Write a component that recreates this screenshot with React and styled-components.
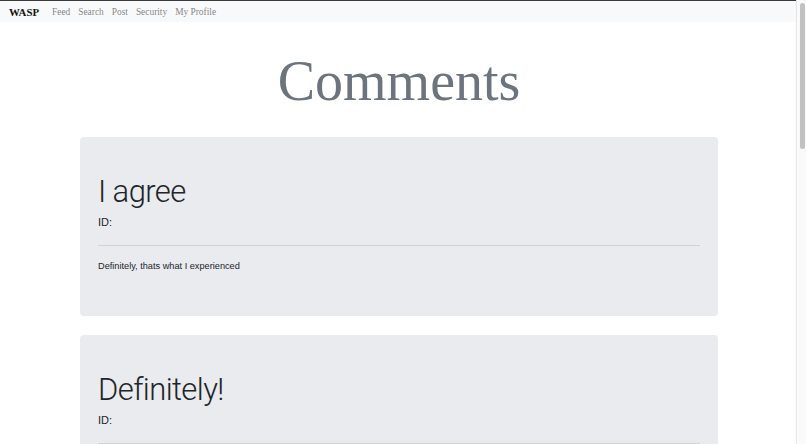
import React from "react";
import styled, { createGlobalStyle } from "styled-components";

const Global = createGlobalStyle`
  html, body { margin: 0; padding: 0; overflow: hidden; background: #fff; }
  body { font-family: "Liberation Sans", Arial, sans-serif; color: #212529; }
  * { box-sizing: border-box; }
`;

const Page = styled.div`
  width: calc(100vw - 8px);
  min-height: 100vh;
`;

const NavBar = styled.nav`
  display: flex;
  align-items: center;
  height: 22px;
  border-top: 1px solid #3a3a3a;
  background: #f8f9fa;
  padding: 0 9px;
  font-family: "Liberation Serif", "Times New Roman", serif;
`;

const Brand = styled.a`
  font-size: 10.8px;
  line-height: 12px;
  font-weight: 700;
  color: #111;
  margin-right: 13px;
  text-decoration: none;
`;

const NavLinks = styled.div`
  display: flex;
  gap: 8px;
`;

const NavLink = styled.a`
  font-size: 9.4px;
  line-height: 12px;
  color: rgba(0, 0, 0, 0.5);
  text-decoration: none;
`;

const Title = styled.h1`
  margin: 25.5px 0 22px;
  text-align: center;
  font-family: "Liberation Serif", "Times New Roman", serif;
  font-weight: 400;
  font-size: 56px;
  line-height: 67px;
  color: #6c757d;
`;

const List = styled.div`
  width: 638px;
  margin: 0 auto;
  display: flex;
  flex-direction: column;
  gap: 19px;
`;

const Card = styled.section`
  background: #e9ebef;
  border-radius: 4px;
  padding: 37px 18px 43px;
`;

const Heading = styled.h2`
  margin: 0 0 4px;
  font-family: Roboto, "Liberation Sans", sans-serif;
  font-weight: 300;
  font-size: 31px;
  line-height: 36px;
  letter-spacing: -0.6px;
  color: #212529;
`;

const Meta = styled.p`
  margin: 0;
  font-size: 11px;
  line-height: 16px;
  color: #212529;
`;

const Rule = styled.hr`
  margin: 15px 0 13px;
  border: 0;
  border-top: 1px solid rgba(0, 0, 0, 0.1);
`;

const Body = styled.p`
  margin: 0;
  font-size: 9.2px;
  line-height: 14px;
  color: #212529;
`;

const ScrollTrack = styled.div`
  position: fixed;
  top: 0;
  right: 0;
  width: 10px;
  height: 100vh;
  background: #fafafa;
  border-left: 1px solid #e6e6e6;
`;

const ScrollThumb = styled.div`
  position: absolute;
  top: 3px;
  left: 3px;
  width: 5px;
  height: 146px;
  border-radius: 3px;
  background: #c2c2c2;
`;

const comments = [
  { title: "I agree", body: "Definitely, thats what I experienced" },
  { title: "Definitely!", body: "Yes, I think so too" },
];

export default function App() {
  return (
    <>
      <Global />
      <Page>
        <NavBar>
          <Brand href="#">WASP</Brand>
          <NavLinks>
            {["Feed", "Search", "Post", "Security", "My Profile"].map((l) => (
              <NavLink key={l} href="#">{l}</NavLink>
            ))}
          </NavLinks>
        </NavBar>
        <Title>Comments</Title>
        <List>
          {comments.map((c) => (
            <Card key={c.title}>
              <Heading>{c.title}</Heading>
              <Meta>ID:</Meta>
              <Rule />
              <Body>{c.body}</Body>
            </Card>
          ))}
        </List>
      </Page>
      <ScrollTrack>
        <ScrollThumb />
      </ScrollTrack>
    </>
  );
}
